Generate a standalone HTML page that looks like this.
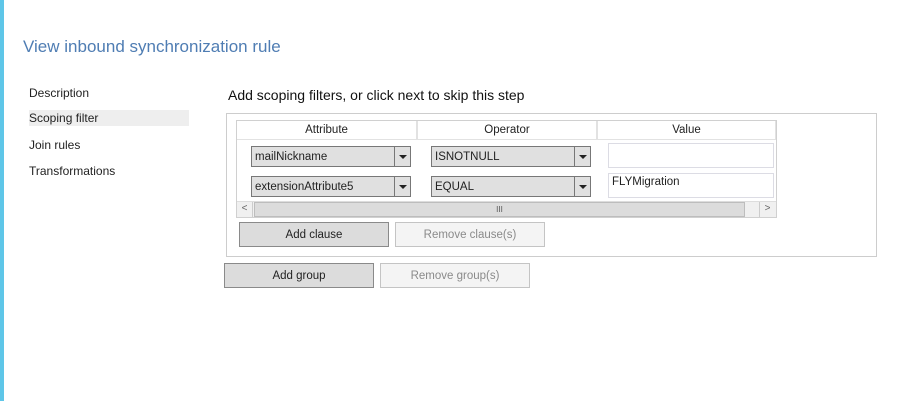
<!DOCTYPE html>
<html><head><style>
*{margin:0;padding:0;box-sizing:border-box}
body{width:919px;height:401px;background:#fff;position:relative;overflow:hidden;font-family:"Segoe UI","Liberation Sans",sans-serif;font-size:12px;color:#222}
.a{position:absolute}
.combo{position:absolute;height:21px;background:#e0e0e0;border:1px solid #777;font-size:11.5px;line-height:20px;padding-left:3px}
.combo .dd{position:absolute;right:0;top:0;width:16px;height:19px;border-left:1px solid #777}
.combo .dd:after{content:"";position:absolute;left:4px;top:8px;border-left:4px solid transparent;border-right:4px solid transparent;border-top:4px solid #222}
.btn{position:absolute;height:25px;border:1px solid #8a8a8a;background:#dcdcdc;text-align:center;line-height:24px;font-size:11.5px}
.btn.dis{background:#f4f4f4;border-color:#c4c4c4;color:#8a8a8a}
.hd{position:absolute;top:121px;height:19px;text-align:center;line-height:19px;font-size:11.5px;border:1px solid #e2e2e2;border-top:0;border-left:0}
</style></head><body>
<div class="a" style="left:0;top:0;width:4px;height:401px;background:#5ec6e8"></div>
<div class="a" style="left:23px;top:37px;font-size:17px;color:#4f7db3">View inbound synchronization rule</div>
<div class="a" style="left:29px;top:86px">Description</div>
<div class="a" style="left:29px;top:110px;width:160px;height:16px;background:#eeeeee"></div>
<div class="a" style="left:29px;top:111px">Scoping filter</div>
<div class="a" style="left:29px;top:138px">Join rules</div>
<div class="a" style="left:29px;top:164px">Transformations</div>
<div class="a" style="left:228px;top:87px;font-size:14px;color:#111">Add scoping filters, or click next to skip this step</div>
<div class="a" style="left:226px;top:113px;width:651px;height:144px;border:1px solid #cdcdcd"></div>
<div class="a" style="left:236px;top:120px;width:541px;height:98px;border:1px solid #d0d0d0;background:#fff"></div>
<div class="hd" style="left:237px;width:180px">Attribute</div>
<div class="hd" style="left:417px;width:180px;border-left:1px solid #e2e2e2">Operator</div>
<div class="hd" style="left:597px;width:179px;border-left:1px solid #e2e2e2">Value</div>
<div class="combo" style="left:251px;top:146px;width:160px">mailNickname<div class="dd"></div></div>
<div class="combo" style="left:431px;top:146px;width:160px">ISNOTNULL<div class="dd"></div></div>
<div class="a" style="left:608px;top:143px;width:166px;height:25px;border:1px solid #dcdce4"></div>
<div class="combo" style="left:251px;top:176px;width:160px">extensionAttribute5<div class="dd"></div></div>
<div class="combo" style="left:431px;top:176px;width:160px">EQUAL<div class="dd"></div></div>
<div class="a" style="left:608px;top:173px;width:166px;height:25px;border:1px solid #dcdce4;font-size:11.5px;padding:2px 3px">FLYMigration</div>
<div class="a" style="left:237px;top:201px;width:539px;height:16px;background:#f0f0f0;border-top:1px solid #ddd"></div>
<div class="a" style="left:237px;top:202px;width:16px;height:15px;border-right:1px solid #ccc;font-size:10px;line-height:14px;text-align:center;color:#666">&lt;</div>
<div class="a" style="left:254px;top:202px;width:491px;height:15px;background:#dcdcdc;border:1px solid #bdbdbd;font-size:8px;line-height:13px;text-align:center;color:#555">III</div>
<div class="a" style="left:759px;top:202px;width:16px;height:15px;border-left:1px solid #ccc;font-size:10px;line-height:14px;text-align:center;color:#666">&gt;</div>
<div class="btn" style="left:239px;top:222px;width:150px">Add clause</div>
<div class="btn dis" style="left:395px;top:222px;width:150px">Remove clause(s)</div>
<div class="btn" style="left:224px;top:263px;width:150px">Add group</div>
<div class="btn dis" style="left:380px;top:263px;width:150px">Remove group(s)</div>
</body></html>
